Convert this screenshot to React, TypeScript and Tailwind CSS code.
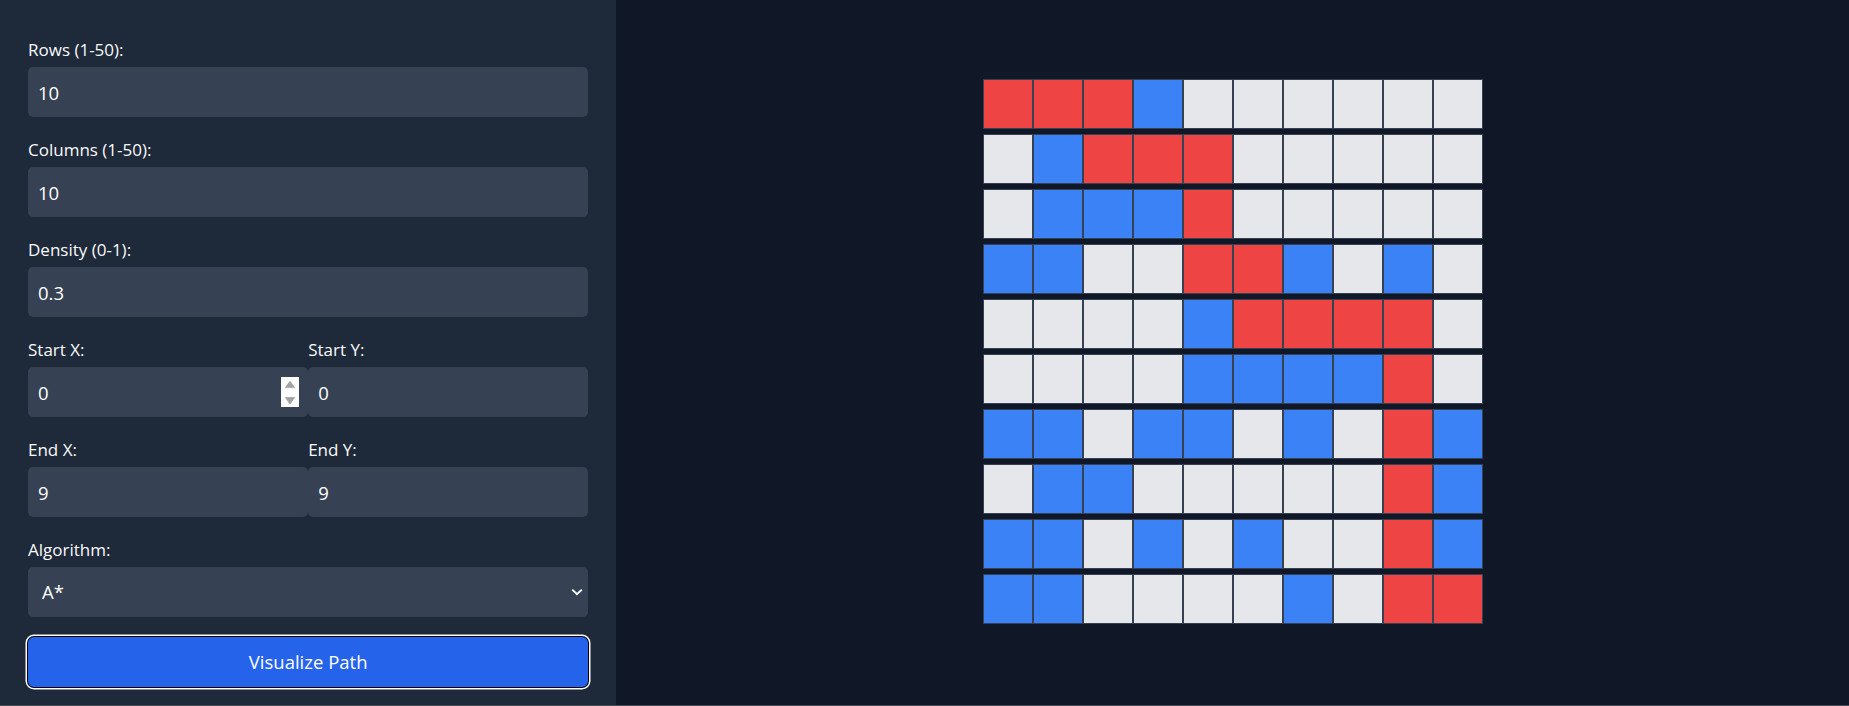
import React from 'react';

type Cell = 'R' | 'B' | 'W';

const GRID: string[] = [
  'RRRBWWWWWW',
  'WBRRRWWWWW',
  'WBBBRWWWWW',
  'BBWWRRBWBW',
  'WWWWBRRRRW',
  'WWWWBBBBRW',
  'BBWBBWBWRB',
  'WBBWWWWWRB',
  'BBWBWBWWRB',
  'BBWWWWBWRR',
];

const cellColor: Record<Cell, string> = {
  R: 'bg-[#ef4444]',
  B: 'bg-[#3b82f6]',
  W: 'bg-[#e5e7eb]',
};

function Spinner() {
  return (
    <div className="pointer-events-none absolute right-[9px] top-1/2 h-[30px] w-[18px] -translate-y-1/2 bg-white">
      <svg width="18" height="30" viewBox="0 0 18 30">
        <path d="M9 4.2 L13.6 10.6 L4.4 10.6 Z" fill="#a3a3a3" stroke="#a3a3a3" strokeWidth="0.8" strokeLinejoin="round" />
        <path d="M9 27 L13.6 20.6 L4.4 20.6 Z" fill="#a3a3a3" stroke="#a3a3a3" strokeWidth="0.8" strokeLinejoin="round" />
      </svg>
    </div>
  );
}

function Field({
  label,
  value,
  spinner,
  className = 'mb-[21px]',
}: {
  label: string;
  value: string;
  spinner?: boolean;
  className?: string;
}) {
  return (
    <div className={className}>
      <label className="mb-[5px] block text-[17px] leading-[24px] text-gray-50">{label}</label>
      <div className="relative">
        <input
          type="text"
          defaultValue={value}
          className="h-[50px] w-full rounded-[5px] bg-gray-700 px-[10px] text-[18.5px] text-white outline-none"
        />
        {spinner && <Spinner />}
      </div>
    </div>
  );
}

export default function App() {
  return (
    <div
      className="flex h-[706px] flex-col bg-gray-900"
      style={{ fontFamily: '"Open Sans", "Noto Sans", sans-serif' }}
    >
      <div className="flex min-h-0 flex-1">
        {/* Controls */}
        <aside className="w-1/3 bg-gray-800 px-[28px] pt-[38px]">
          <Field label="Rows (1-50):" value="10" />
          <Field label="Columns (1-50):" value="10" />
          <Field label="Density (0-1):" value="0.3" />
          <div className="grid grid-cols-2">
            <Field label="Start X:" value="0" spinner />
            <Field label="Start Y:" value="0" />
            <Field label="End X:" value="9" />
            <Field label="End Y:" value="9" />
          </div>
          <div className="mb-[20px]">
            <label className="mb-[5px] block text-[17px] leading-[24px] text-gray-50">Algorithm:</label>
            <div className="relative">
              <select
                defaultValue="astar"
                className="h-[50px] w-full appearance-none rounded-[5px] bg-gray-700 px-[14px] text-[18.5px] text-white outline-none"
              >
                <option value="astar">A*</option>
                <option value="dijkstra">Dijkstra</option>
                <option value="bfs">BFS</option>
              </select>
              <svg
                className="pointer-events-none absolute right-[5px] top-1/2 -translate-y-1/2"
                width="12"
                height="8"
                viewBox="0 0 12 8"
              >
                <path d="M1.2 1.6 L6 6.2 L10.8 1.6" fill="none" stroke="white" strokeWidth="2" />
              </svg>
            </div>
          </div>
          <button className="h-[50px] w-full rounded-[6px] bg-[#2563eb] text-[18.5px] text-white shadow-[0_0_0_1px_#000,0_0_0_2.5px_#fff]">
            Visualize Path
          </button>
        </aside>

        {/* Grid */}
        <main className="flex flex-1 items-center justify-center pb-[2px]">
          <div className="flex flex-col gap-[5px]">
            {GRID.map((row, r) => (
              <div key={r} className="flex">
                {row.split('').map((c, i) => (
                  <div
                    key={i}
                    className={`h-[50px] w-[50px] border border-gray-700 ${cellColor[c as Cell]}`}
                  ></div>
                ))}
              </div>
            ))}
          </div>
        </main>
      </div>
      <div className="h-px bg-[#474d57]"></div>
    </div>
  );
}
